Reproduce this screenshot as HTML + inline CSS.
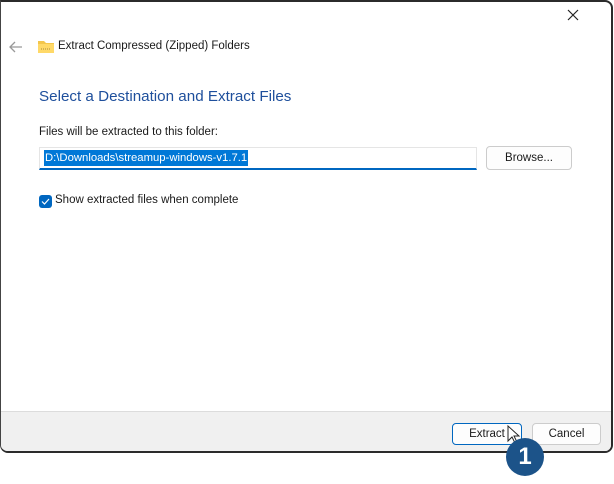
<!DOCTYPE html>
<html><head><style>
*{margin:0;padding:0;box-sizing:border-box}
body{width:614px;height:484px;background:#fff;position:relative;overflow:hidden;font-family:"Liberation Sans",sans-serif;font-size:11.5px;color:#1a1a1a}
.win{position:absolute;left:0;top:0;width:613px;height:453px;border:2px solid #2b2b2b;border-left:1px solid #444;border-radius:0 8px 8px 8px;background:#fff;overflow:hidden}
.foot{position:absolute;left:0;right:0;bottom:0;height:40px;background:#f0f0f0;border-top:1px solid #dcdcdc}
.t{position:absolute;white-space:nowrap}
.btn{position:absolute;height:22px;border:1px solid #ccc;border-radius:4px;background:#fdfdfd;text-align:center;line-height:20px;font-size:11.5px}
</style></head><body>
<div class="win">
<svg class="t" style="left:565px;top:6px" width="14" height="14"><path d="M2 2L12 12M12 2L2 12" stroke="#222" stroke-width="1.2"/></svg>
<svg class="t" style="left:7px;top:38px" width="16" height="14"><path d="M14 7H2M7 2L2 7L7 12" stroke="#999" stroke-width="1.3" fill="none"/></svg>
<svg class="t" style="left:36px;top:36px" width="18" height="16"><path d="M1 3h6l2 2h8v10H1z" fill="#f3c64c"/><rect x="1" y="6" width="16" height="9" fill="#ffd968"/><path d="M4 11h10" stroke="#a78a3a" stroke-dasharray="1 1"/></svg>
<div class="t" style="left:57px;top:38px">Extract Compressed (Zipped) Folders</div>
<div class="t" style="left:38px;top:86px;font-size:15.2px;color:#1e4f9c">Select a Destination and Extract Files</div>
<div class="t" style="left:38px;top:124px">Files will be extracted to this folder:</div>
<div class="t" style="left:38px;top:145px;width:438px;height:23px;border-bottom:2px solid #0067c0;border-left:1px solid #e5e5e5;border-top:1px solid #e5e5e5;border-right:1px solid #e5e5e5"></div>
<div class="t" style="left:43px;top:148px;background:#0078d7;color:#fff;padding:0 1px;line-height:16px;font-size:11.3px">D:\Downloads\streamup-windows-v1.7.1</div>
<div class="btn" style="left:485px;top:144px;width:86px;height:24px;line-height:22px">Browse...</div>
<div class="t" style="left:38px;top:193px;width:13px;height:13px;background:#0067c0;border-radius:3px"><svg width="13" height="13"><path d="M3 6.5L5.5 9L10 4" stroke="#fff" stroke-width="1.2" fill="none"/></svg></div>
<div class="t" style="left:54px;top:192px">Show extracted files when complete</div>
<div class="foot"></div>
<div class="btn" style="left:451px;top:421px;width:70px;border:1px solid #0067c0">Extract</div>
<div class="btn" style="left:531px;top:421px;width:69px">Cancel</div>
</div>
<svg class="t" style="left:505px;top:424px" width="20" height="24"><path d="M3 2L3 17L7 13L10 19L12 18L9 12L14 12Z" fill="#fff" stroke="#222" stroke-width="1"/></svg>
<div class="t" style="left:506px;top:438px;width:38px;height:38px;border-radius:50%;background:#1c5389;color:#fff;font-weight:bold;font-size:24px;text-align:center;line-height:38px">1</div>
</body></html>
